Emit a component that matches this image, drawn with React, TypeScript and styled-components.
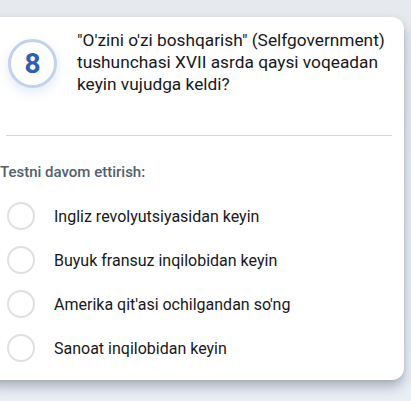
import styled, { createGlobalStyle } from "styled-components";

const GlobalStyle = createGlobalStyle`
    html, body {
        margin: 0;
        padding: 0;
        background: linear-gradient(180deg, #e6e9ee 0%, #eaeef5 100%);
        font-family: Roboto, "Noto Sans", sans-serif;
        overflow: hidden;
    }
    #root {
        width: 411px;
        height: 401px;
    }
`;

const Page = styled.div`
    padding-top: 17px;
    height: 401px;
    box-sizing: border-box;
`;

const Card = styled.div`
    margin-left: -16px;
    width: 420px;
    height: 363px;
    box-sizing: border-box;
    background: #ffffff;
    border-radius: 12px;
    box-shadow: 0 7px 12px rgba(70, 85, 110, 0.38), 0 1px 3px rgba(70, 85, 110, 0.12);
    padding: 4px 0 0 16px;
`;

const Header = styled.div`
    display: flex;
    align-items: flex-start;
    gap: 20px;
    padding-left: 8px;
`;

const Badge = styled.div`
    flex: none;
    width: 49px;
    height: 49px;
    margin-top: 18px;
    box-sizing: border-box;
    border-radius: 50%;
    border: 3px solid #c1d2ed;
    background: #fff;
    box-shadow: 0 4px 12px rgba(90, 130, 210, 0.18);
    display: flex;
    align-items: center;
    justify-content: center;
    color: #2c5fb6;
    font-size: 28px;
    font-weight: 700;
`;

const Question = styled.p`
    margin: 0;
    padding-top: 8px;
    width: 320px;
    font-size: 17.3px;
    line-height: 22px;
    color: #18181b;
`;

const Divider = styled.hr`
    margin: 40px 0 0 6px;
    width: 386px;
    border: none;
    border-top: 1px solid #cdd6e0;
`;

const Hint = styled.div`
    margin-top: 27px;
    font-size: 15px;
    line-height: 18px;
    font-weight: 500;
    color: #545e70;
`;

const Options = styled.div`
    margin-top: 21px;
    display: flex;
    flex-direction: column;
    gap: 16px;
    padding-left: 7px;
`;

const Option = styled.label`
    display: flex;
    align-items: center;
    gap: 19px;
    height: 28px;
    font-size: 16px;
    color: #18181b;
    cursor: pointer;
`;

const Radio = styled.span`
    flex: none;
    width: 28px;
    height: 28px;
    box-sizing: border-box;
    border-radius: 50%;
    border: 2px solid #e0e0e0;
    background: #fff;
`;

const answers = [
    "Ingliz revolyutsiyasidan keyin",
    "Buyuk fransuz inqilobidan keyin",
    "Amerika qit'asi ochilgandan so'ng",
    "Sanoat inqilobidan keyin",
];

export default function App() {
    return (
        <>
            <GlobalStyle />
            <Page>
                <Card>
                    <Header>
                        <Badge>8</Badge>
                        <Question>
                            "O′zini o′zi boshqarish" (Selfgovernment) tushunchasi XVII asrda qaysi voqeadan keyin vujudga keldi?
                        </Question>
                    </Header>
                    <Divider />
                    <Hint>Testni davom ettirish:</Hint>
                    <Options>
                        {answers.map((a) => (
                            <Option key={a}>
                                <Radio />
                                {a}
                            </Option>
                        ))}
                    </Options>
                </Card>
            </Page>
        </>
    );
}
